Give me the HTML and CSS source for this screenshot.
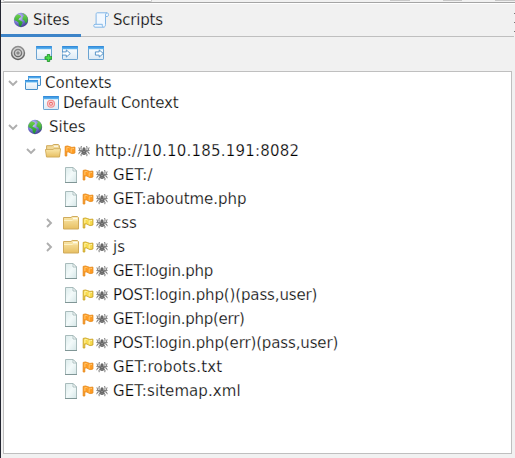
FILE: index.html
```html
<!DOCTYPE html>
<html lang="en">
<head>
<meta charset="utf-8">
<title>Sites</title>
<link rel="stylesheet" href="styles.css">
</head>
<body>
<svg class="defs" width="0" height="0">
  <defs>
    <radialGradient id="sea" cx=".35" cy=".3" r=".8"><stop offset="0" stop-color="#d5d3fb"/><stop offset=".5" stop-color="#7d7ad8"/><stop offset="1" stop-color="#35347f"/></radialGradient>
    <linearGradient id="land" x2="0" y2="1"><stop offset="0" stop-color="#7ad850"/><stop offset="1" stop-color="#15912c"/></linearGradient>
    <linearGradient id="bar" x2="0" y2="1"><stop offset="0" stop-color="#2b83d5"/><stop offset="1" stop-color="#65bdf5"/></linearGradient>
    <linearGradient id="pane" x2="0" y2="1"><stop offset="0" stop-color="#fff"/><stop offset="1" stop-color="#dceaf5"/></linearGradient>
    <linearGradient id="paper" x2="1" y2="1"><stop offset="0" stop-color="#dcebeb"/><stop offset=".5" stop-color="#f3fafa"/><stop offset="1" stop-color="#d5e6e7"/></linearGradient>
    <linearGradient id="gold" x2="0" y2="1"><stop offset="0" stop-color="#fbe9ad"/><stop offset="1" stop-color="#e7bf62"/></linearGradient>
    <linearGradient id="metal" x2="0" y2="1"><stop offset="0" stop-color="#929292"/><stop offset="1" stop-color="#5c5c5c"/></linearGradient>
    <symbol id="globe" viewBox="0 0 16 16">
      <circle cx="8" cy="8" r="7.2" fill="url(#sea)"/>
      <path d="M1.2 7C1.8 4.6 3 3 4.8 2.2L7.6 3.6 8.1 5 6.3 6.2 5.4 7.8 7.4 8.4 9.8 10 8.8 12.2 7.6 14.8 5.9 13.2 5.5 10.6 3.4 9 1.8 8.6ZM8.6 1.2C12 1.4 14.1 3.7 14.8 6.2L14.4 9.8 12.6 11.6 11.6 8.8 9.4 7.4 9.8 5 11.2 3.6Z" fill="url(#land)"/>
    </symbol>
    <symbol id="scroll" viewBox="0 0 16 16">
      <path d="M4.2 .8H14C15.9.8 15.9 4.4 14.3 4.5H12.5V12.4C12.5 14 11.9 15.2 10.5 15.2H2C.3 15.2.3 12.3 2 12.3H3.1V2.3C3.1 1.3 3.5.8 4.2.8Z" fill="#f2f8ff" stroke="#83b7e7"/>
      <path d="M14 .8C12.6 1 12.5 2.2 12.5 4.5M3 12.3H9.3C9.1 13.5 9.5 15.2 10.5 15.2" fill="none" stroke="#83b7e7"/>
    </symbol>
    <symbol id="target" viewBox="0 0 16 16">
      <circle cx="8" cy="8" r="7.2" fill="url(#metal)"/><circle cx="8" cy="8" r="5" fill="none" stroke="#d4d4d4" stroke-width="1.4"/><circle cx="8" cy="8" r="2.3" fill="#888" stroke="#d8d8d8" stroke-width="1.1"/>
    </symbol>
    <symbol id="window" viewBox="0 0 16 16">
      <rect x=".5" y="1.5" width="15" height="13" rx=".6" fill="url(#pane)" stroke="#6ba3d1"/>
      <path d="M0 1.5Q0 1 .6 1H15.4Q16 1 16 1.5V4.3H0Z" fill="url(#bar)"/>
    </symbol>
    <symbol id="window-add" viewBox="0 0 16 17">
      <use href="#window" width="16" height="16"/>
      <path d="M11.3 9.5h2.4v2.2H16v2.5h-2.3v2.3h-2.4v-2.3H9v-2.5h2.3z" fill="#47de4b" stroke="#168923" stroke-width=".8"/>
    </symbol>
    <symbol id="window-in" viewBox="0 0 16 16">
      <use href="#window" width="16" height="16"/>
      <path d="M0 6.9h4.3V4.9L8.3 8.5l-4 3.6v-2H0z" fill="#fff" stroke="#4b8cc4" stroke-width=".9"/>
    </symbol>
    <symbol id="window-out" viewBox="0 0 16 16">
      <use href="#window" width="16" height="16"/>
      <path d="M7.4 6.9h3.8V4.9L15.3 8.5l-4.1 3.6v-2H7.4z" fill="#fff" stroke="#4b8cc4" stroke-width=".9"/>
    </symbol>
    <symbol id="windows" viewBox="0 0 16 16">
      <rect x="3.5" y="1.5" width="12" height="9" rx=".5" fill="url(#pane)" stroke="#478fc9"/><path d="M3 1h13v2.5H3z" fill="url(#bar)"/>
      <rect x=".5" y="5.5" width="12" height="9" rx=".5" fill="url(#pane)" stroke="#478fc9"/><path d="M0 5h13v2.5H0z" fill="url(#bar)"/>
    </symbol>
    <symbol id="context" viewBox="0 0 16 16">
      <use href="#window" width="16" height="16"/>
      <circle cx="8" cy="8.8" r="3.5" fill="#fbd1d1" stroke="#f38e8f" stroke-width="1.1"/><circle cx="8" cy="8.8" r="1.4" fill="#fff" stroke="#e9696b" stroke-width="1.1"/>
    </symbol>
    <symbol id="page" viewBox="0 0 16 16">
      <path d="M2.5.5H10L13.5 4V15.5H2.5Z" fill="url(#paper)" stroke="#a9bcbc"/>
      <path d="M10 .5V4H13.5Z" fill="#fff" stroke="#9fb5b5" stroke-width=".8"/><path d="M2 15.5H14" stroke="#809696"/>
    </symbol>
    <symbol id="folder" viewBox="0 0 16 16">
      <path d="M.5 14V2.5H8L9.2 1.5H14.5L15.5 2.6V14Z" fill="url(#gold)" stroke="#d0ab5c"/>
      <path d="M10 3.3h4.5" stroke="#fff"/><path d="M1 5.5H9L10 4.8H15" fill="none" stroke="#fdf1c4"/>
    </symbol>
    <symbol id="folder-open" viewBox="0 0 16 16">
      <path d="M1.6 13.6V2.7H7L8.5 1.5H13.4L14.4 2.8V13.6Z" fill="#f1d896" stroke="#d0ab5c"/>
      <path d="M9 3.2h4" stroke="#fff"/>
      <path d="M.4 6.5H8L9 5.7H15.6L14.5 14H1.5Z" fill="url(#gold)" stroke="#d0ab5c" stroke-width=".9"/>
    </symbol>
    <symbol id="flag" viewBox="0 0 12 12">
      <path d="M1.2 1.4Q3.6.5 5.5 1.6 7.4 3 10.9 2.1V8Q8 9.3 5.8 7.6 4.2 6.4 2.8 7V11H1.2Z" fill="var(--fill)" stroke="var(--edge)" stroke-width=".9"/>
      <path d="M2.9 2.3V6M3.2 2.5q1.2-.3 2.4.5M7.2 3.6V7.5M7.4 3.7q1.2.1 2.6-.3" fill="none" stroke="var(--shine)" stroke-width=".9"/>
    </symbol>
    <symbol id="spider" viewBox="0 0 12 12">
      <path d="M4.6 4.8L2.8 3.6 3.4 1M4.3 5.9L1.8 5 .9 2.4M4.3 6.8L1.6 7 .7 9.2M4.5 7.9L3 9l.2 2.2M7.4 4.8l1.8-1.2L8.6 1M7.7 5.9l2.5-.9.9-2.6M7.7 6.8l2.7.2.9 2.2M7.5 7.9L9 9l-.2 2.2M.4 5.4l3.8.8M11.6 5.4l-3.8.8" fill="none" stroke="#6c6c6c" stroke-width=".9"/>
      <ellipse cx="6" cy="7.2" rx="2.1" ry="2.9" fill="#666"/><path d="M4.8 7l1.2-.7 1.2.7M6 8v2" stroke="#aaa" stroke-width=".6" fill="none"/><circle cx="6" cy="3.8" r="1.5" fill="#686868"/>
    </symbol>
    <symbol id="chevron" viewBox="0 0 10 10"><path d="M1 3L5 7 9 3" fill="none" stroke="#aeaeae" stroke-width="1.9"/></symbol>
  </defs>
</svg>
<div class="app">
  <div class="strip"><i class="field"></i><i class="stub one"></i><i class="stub two"></i><i class="stub three"></i></div>
  <nav class="tabs">
    <div class="tab active"><svg class="icon"><use href="#globe"/></svg><span>Sites</span></div>
    <div class="tab scripts"><svg class="icon"><use href="#scroll"/></svg><span class="snug">Scripts</span></div>
    <div class="clipped"><i></i><i></i><i></i></div>
  </nav>
  <div class="toolbar">
    <svg class="icon"><use href="#target"/></svg>
    <svg class="icon add"><use href="#window-add"/></svg>
    <svg class="icon"><use href="#window-in"/></svg>
    <svg class="icon"><use href="#window-out"/></svg>
  </div>
  <div class="tree">
    <div class="row short"><svg class="chev"><use href="#chevron"/></svg><svg class="icon"><use href="#windows"/></svg><span>Contexts</span></div>
    <div class="row short context"><svg class="icon"><use href="#context"/></svg><span class="snug">Default Context</span></div>
    <div class="row sites"><svg class="chev"><use href="#chevron"/></svg><svg class="icon"><use href="#globe"/></svg><span>Sites</span></div>
    <div class="row host"><svg class="chev"><use href="#chevron"/></svg><svg class="icon"><use href="#folder-open"/></svg><svg class="mini orange"><use href="#flag"/></svg><svg class="mini"><use href="#spider"/></svg><span class="wide">http://10.10.185.191:8082</span></div>
    <div class="row leaf"><svg class="icon"><use href="#page"/></svg><svg class="mini orange"><use href="#flag"/></svg><svg class="mini"><use href="#spider"/></svg><span class="wide">GET:/</span></div>
    <div class="row leaf"><svg class="icon"><use href="#page"/></svg><svg class="mini orange"><use href="#flag"/></svg><svg class="mini"><use href="#spider"/></svg><span class="even">GET:aboutme.php</span></div>
    <div class="row dir"><svg class="chev closed"><use href="#chevron"/></svg><svg class="icon"><use href="#folder"/></svg><svg class="mini yellow"><use href="#flag"/></svg><svg class="mini"><use href="#spider"/></svg><span>css</span></div>
    <div class="row dir"><svg class="chev closed"><use href="#chevron"/></svg><svg class="icon"><use href="#folder"/></svg><svg class="mini yellow"><use href="#flag"/></svg><svg class="mini"><use href="#spider"/></svg><span>js</span></div>
    <div class="row leaf"><svg class="icon"><use href="#page"/></svg><svg class="mini orange"><use href="#flag"/></svg><svg class="mini"><use href="#spider"/></svg><span class="tight">GET:login.php</span></div>
    <div class="row leaf"><svg class="icon"><use href="#page"/></svg><svg class="mini yellow"><use href="#flag"/></svg><svg class="mini"><use href="#spider"/></svg><span class="post">POST:login.php()(pass,user)</span></div>
    <div class="row leaf"><svg class="icon"><use href="#page"/></svg><svg class="mini orange"><use href="#flag"/></svg><svg class="mini"><use href="#spider"/></svg><span class="tight">GET:login.php(err)</span></div>
    <div class="row leaf"><svg class="icon"><use href="#page"/></svg><svg class="mini yellow"><use href="#flag"/></svg><svg class="mini"><use href="#spider"/></svg><span class="post">POST:login.php(err)(pass,user)</span></div>
    <div class="row leaf"><svg class="icon"><use href="#page"/></svg><svg class="mini orange"><use href="#flag"/></svg><svg class="mini"><use href="#spider"/></svg><span class="wide">GET:robots.txt</span></div>
    <div class="row leaf"><svg class="icon"><use href="#page"/></svg><svg class="mini orange"><use href="#flag"/></svg><svg class="mini"><use href="#spider"/></svg><span class="sitemap">GET:sitemap.xml</span></div>
  </div>
</div>
</body>
</html>
```
FILE: styles.css
```css
* { box-sizing: border-box; }
html, body { margin: 0; height: 100%; overflow: hidden; }
body { font: 15px/18px "DejaVu Sans", sans-serif; color: #000; background: #f1f1f1; }
.defs { position: absolute; }
.app { height: 458px; border-left: 1px solid #242631; display: flex; flex-direction: column; }
.strip { height: 4px; border-bottom: 1px solid #fff; box-shadow: inset 0 -1px #a5a5a5; display: flex; flex: none; }
.field { width: 152px; height: 2px; margin-left: 2px; background: #fff; border: solid #c4c4c4; border-width: 0 1px 1px; border-radius: 0 0 2px 2px; }
.stub { width: 20px; height: 1px; background: #c8c8c8; }
.one { margin-left: 238px; }
.two { margin-left: 33px; }
.three { margin-left: 33px; }
.tabs { height: 33px; display: flex; flex: none; margin-right: 1px; }
.tab { display: flex; align-items: center; gap: 4px; width: 80px; padding-top: 2px; padding-left: 12px; border-bottom: 3px solid #3d84c8; }
.tab .icon { margin-top: 0; }
.tab span { -webkit-text-stroke: .25px #f1f1f1; }
.scripts { width: auto; flex: 1; gap: 4px; border-bottom: 1px solid #bfbfbf; padding-bottom: 2px; }
.clipped { position: absolute; right: 0; top: 13px; width: 1px; display: grid; gap: 8px; }
.clipped i { height: 1px; background: #777; }
.icon { width: 16px; height: 16px; flex: none; }
.add { height: 17px; margin-bottom: -1px; }
.toolbar { height: 34px; flex: none; display: flex; align-items: center; gap: 10px; padding: 0 0 2px 9px; }
.tree { flex: 1; margin: 0 3px 4px 2px; border: 1px solid #bfbfbf; background: #fff; padding-top: 1px; }
.row { display: flex; align-items: center; height: 24px; white-space: nowrap; }
.short { height: 20px; }
.chev { width: 10px; height: 10px; flex: none; margin-left: 4px; margin-right: 7px; }
.closed { transform: rotate(-90deg); }
.context { padding-left: 39px; }
.row span { margin-left: 4px; -webkit-text-stroke: .25px #fff; }
.sites { margin-top: 2px; }
.sites .icon { margin-left: 2px; }
.row.sites span { margin-left: 6px; }
.host { padding-left: 18px; }
.host .chev { margin-right: 9px; }
.dir { padding-left: 36px; }
.dir .chev { margin-right: 9px; }
.leaf { padding-left: 59px; }
.mini { width: 12px; height: 12px; flex: none; margin-left: 3px; }
.mini + .mini { margin-left: 2px; }
.row .mini + span { margin-left: 5px; }
.snug { letter-spacing: -.2px; }
.wide { letter-spacing: .21px; }
.even { letter-spacing: -.05px; }
.tight { letter-spacing: -.27px; }
.post { letter-spacing: -.14px; }
.sitemap { letter-spacing: .08px; }
.orange { --fill: #ff9c22; --edge: #e68a1c; --shine: #ffcb78; }
.yellow { --fill: #f7da4e; --edge: #c8a024; --shine: #fff5b4; }
```
